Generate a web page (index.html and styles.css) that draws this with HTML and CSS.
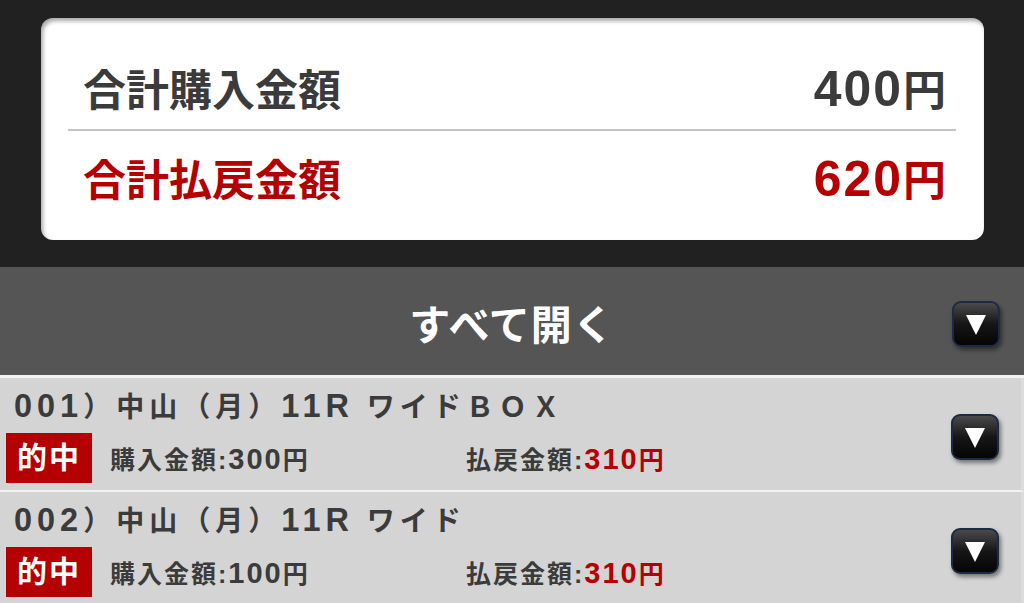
FILE: index.html
```html
<!DOCTYPE html>
<html lang="ja">
<head>
    <meta charset="UTF-8">
    <meta name="viewport" content="width=device-width, initial-scale=1.0">
    <title>投票結果</title>
    <link rel="stylesheet" href="styles.css">
</head>
<body>
    <div class="summary">
        <div class="summary-card">
            <div class="summary-row">
                <span>合計購入金額</span>
                <span><span class="num">400</span>円</span>
            </div>
            <div class="summary-row payout">
                <span>合計払戻金額</span>
                <span><span class="num">620</span>円</span>
            </div>
        </div>
    </div>

    <div class="open-all">
        <span class="open-all-label">すべて開く</span>
        <a class="toggle"></a>
    </div>

    <div class="bets">
        <div class="bet">
            <div class="bet-info">
                <div class="bet-title"><span class="num">001</span>）中山（月）<span class="num">11R</span> ワイドＢＯＸ</div>
                <div class="bet-detail">
                    <span class="hit">的中</span>
                    <span class="amount">購入金額:<span class="num">300</span>円</span>
                    <span class="amount">払戻金額:<em><span class="num">310</span>円</em></span>
                </div>
            </div>
            <a class="toggle"></a>
        </div>
        <div class="bet">
            <div class="bet-info">
                <div class="bet-title"><span class="num">002</span>）中山（月）<span class="num">11R</span> ワイド</div>
                <div class="bet-detail">
                    <span class="hit">的中</span>
                    <span class="amount">購入金額:<span class="num">100</span>円</span>
                    <span class="amount">払戻金額:<em><span class="num">310</span>円</em></span>
                </div>
            </div>
            <a class="toggle"></a>
        </div>
    </div>
</body>
</html>
```

FILE: styles.css
```css
body {
    margin: 0;
    font-family: "Liberation Sans", "Noto Sans CJK JP", sans-serif;
    font-weight: bold;
    color: #3b3b3b;
    background-color: #d4d4d4;
}
/* latin digits sit a size up next to the kanji */
.num {
    font-size: 1.16em;
    line-height: 1;
}
.summary {
    background-color: #212121;
    padding: 18px 40px 27px 41px;
}
.summary-card {
    background: #fff;
    border-radius: 12px;
    padding: 0 28px 0 27px;
    box-shadow: inset 2px 3px 4px rgba(0, 0, 0, 0.35);
}
.summary-row {
    display: flex;
    justify-content: space-between;
    align-items: baseline;
    height: 42px;
    font-size: 43px;
    line-height: 42px;
    padding: 47px 10px 22px 15px;
    border-bottom: 2px solid #c4c4c4;
}
.summary-row .num {
    letter-spacing: 2px;
}
.summary-row.payout {
    color: #b40000;
    padding: 24px 10px 43px 15px;
    border-bottom: none;
}
.open-all {
    display: flex;
    align-items: center;
    justify-content: center;
    position: relative;
    height: 108px;
    background-color: #555;
    border-bottom: 3px solid #f2f2f2;
}
.open-all-label {
    color: #fff;
    font-size: 41px;
    letter-spacing: 1px;
    margin-top: 2px;
}
.open-all .toggle {
    position: absolute;
    right: 24px;
    top: 34px;
}
.toggle {
    display: flex;
    align-items: center;
    justify-content: center;
    width: 44px;
    height: 42px;
    border: 2px solid #1b2b44;
    border-radius: 9px;
    background: linear-gradient(#4a4a4a, #161616 50%, #050505);
    box-shadow: 2px 3px 4px rgba(0, 0, 0, 0.45);
}
.toggle::after {
    content: "";
    border-left: 10px solid transparent;
    border-right: 10px solid transparent;
    border-top: 20px solid #fff;
    margin-top: 2px;
}
.bet {
    display: flex;
    align-items: center;
    justify-content: space-between;
    padding: 12px 22px 7px 6px;
    border-bottom: 2px solid #f2f2f2;
    border-right: 3px solid #dcdcdc;
}
.bet-title {
    height: 36px;
    font-size: 28px;
    line-height: 36px;
    letter-spacing: 5px;
    padding-left: 8px;
    white-space: nowrap;
}
.bet-detail {
    display: flex;
    align-items: center;
    height: 50px;
    margin-top: 7px;
}
.hit {
    width: 86px;
    height: 50px;
    line-height: 50px;
    text-align: center;
    color: #fff;
    background-color: #b40000;
    font-size: 30px;
    letter-spacing: 2px;
}
.amount {
    font-size: 25px;
    letter-spacing: 2px;
    margin-left: 18px;
    width: 338px;
}
.amount em {
    font-style: normal;
    color: #b40000;
}
```
